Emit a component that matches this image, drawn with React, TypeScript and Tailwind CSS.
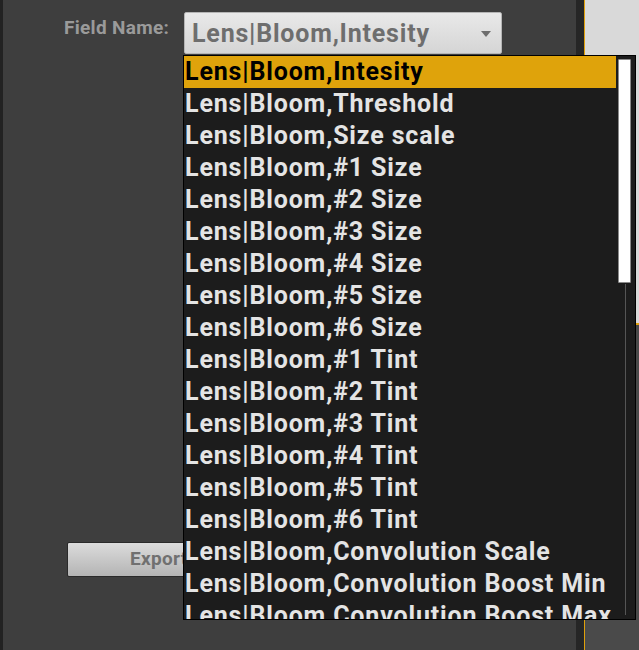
const FIELDS = [
  "Lens|Bloom,Intesity",
  "Lens|Bloom,Threshold",
  "Lens|Bloom,Size scale",
  "Lens|Bloom,#1 Size",
  "Lens|Bloom,#2 Size",
  "Lens|Bloom,#3 Size",
  "Lens|Bloom,#4 Size",
  "Lens|Bloom,#5 Size",
  "Lens|Bloom,#6 Size",
  "Lens|Bloom,#1 Tint",
  "Lens|Bloom,#2 Tint",
  "Lens|Bloom,#3 Tint",
  "Lens|Bloom,#4 Tint",
  "Lens|Bloom,#5 Tint",
  "Lens|Bloom,#6 Tint",
  "Lens|Bloom,Convolution Scale",
  "Lens|Bloom,Convolution Boost Min",
  "Lens|Bloom,Convolution Boost Max",
];

const selected = FIELDS[0];

export default function App() {
  return (
    <div
      className="relative flex h-[650px] w-[639px] overflow-hidden"
      style={{ fontFamily: "Roboto, 'Liberation Sans', sans-serif" }}
    >
      <div className="w-[3px] shrink-0 bg-[#222222]" />

      <div className="flex w-[573px] shrink-0 flex-col bg-[#3e3e3e]">
        <div className="mt-3 flex items-start">
          <span className="ml-[61px] mt-[4px] w-[120px] text-[19px] font-bold leading-[24px] tracking-[0.3px] text-[#9a9a9a]">
            Field Name:
          </span>
          <div className="flex h-[42px] w-[318px] items-center justify-between rounded-[2px] border border-[#b5b5b5] bg-gradient-to-b from-[#e9e9e9] to-[#d5d5d5] pl-[7px] pr-[10px]">
            <span className="text-[25px] font-bold leading-none tracking-[0.8px] text-[#6e6e6e]">
              {selected}
            </span>
            <svg width="10" height="6" viewBox="0 0 10 6" className="mt-[2px]">
              <path d="M0 0h10L5 6z" fill="#6e6e6e" />
            </svg>
          </div>
        </div>

        <div className="mt-[488px] ml-[64px]">
          <button className="h-[35px] w-[140px] rounded-[2px] border border-[#2a2a2a] bg-gradient-to-b from-[#dcdcdc] to-[#b4b4b4] pl-[62px] text-left text-[19px] font-bold tracking-[0.3px] text-[#707070]">
            Export
          </button>
        </div>
      </div>

      <div className="w-[8px] shrink-0 bg-[#262626]" />
      <div className="w-px shrink-0 bg-[#dfa00c]" />

      <div className="flex flex-1 flex-col">
        <div className="h-[323px] bg-[#d9d9d9]" />
        <div className="h-[2px] bg-[#dfa00c]" />
        <div className="flex-1 bg-[#4a4a4a]" />
      </div>

      <div className="absolute left-[183px] top-[55px] flex h-[565px] w-[453px] border border-black bg-[#1c1c1c]">
        <div className="flex-1 overflow-hidden">
          {FIELDS.map((f) => (
            <div
              key={f}
              className={
                f === selected
                  ? "h-[32px] whitespace-nowrap bg-[#dfa30b] pl-[1px] text-[25px] font-bold leading-[32px] tracking-[0.85px] text-black"
                  : "h-[32px] whitespace-nowrap pl-[1px] text-[25px] font-bold leading-[32px] tracking-[0.85px] text-[#e4e4e4]"
              }
            >
              {f}
            </div>
          ))}
        </div>
        <div className="relative w-[19px] shrink-0">
          <div className="absolute left-[9px] top-[228px] bottom-[4px] w-px bg-[#555555]" />
          <div className="absolute left-[2px] top-[3px] h-[224px] w-[13px] rounded-[1px] border border-[#8a8a8a] bg-white" />
        </div>
      </div>
    </div>
  );
}
